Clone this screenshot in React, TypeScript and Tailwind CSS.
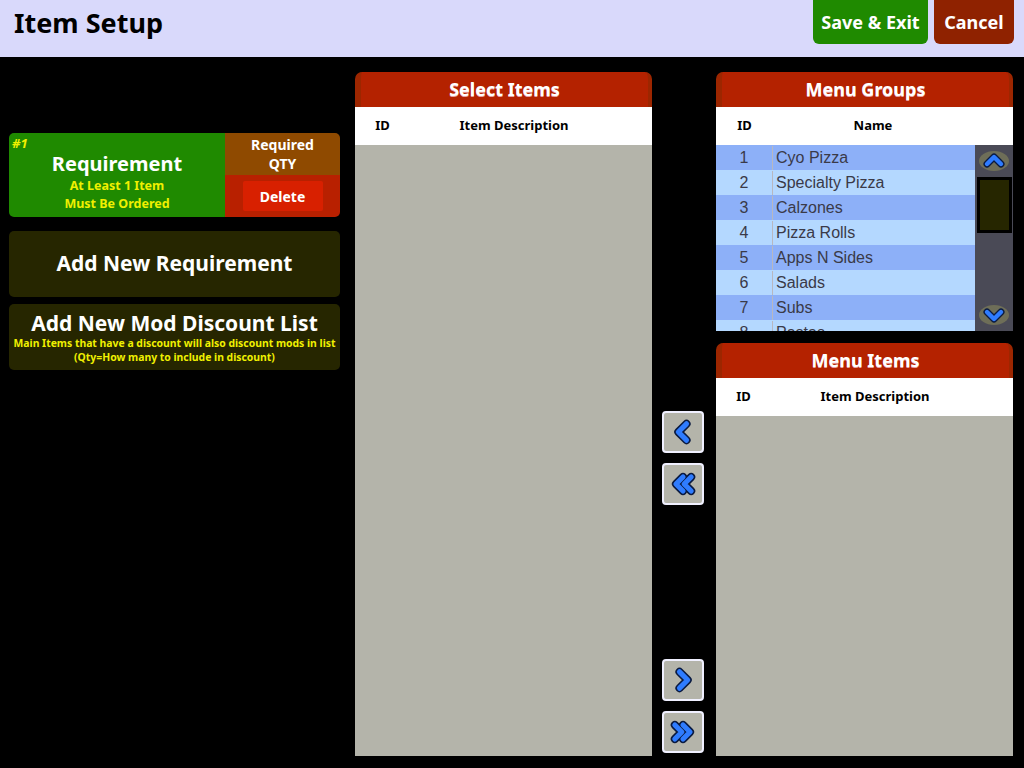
import type { ReactNode } from 'react';

const groups = [
  'Cyo Pizza',
  'Specialty Pizza',
  'Calzones',
  'Pizza Rolls',
  'Apps N Sides',
  'Salads',
  'Subs',
  'Pastas',
];

const boldFont = "font-['Noto_Sans',sans-serif] font-bold";

// Blue chevron with a dark outline, used on the move buttons and scroll arrows
function Chevron({ dir, double = false, size = 26 }: { dir: 'left' | 'right' | 'up' | 'down'; double?: boolean; size?: number }) {
  const rot = { right: 0, down: 90, left: 180, up: 270 }[dir];
  const paths = double ? ['M5 6 L11 12 L5 18', 'M12 6 L18 12 L12 18'] : ['M9 5 L16 12 L9 19'];
  return (
    <svg width={size} height={size} viewBox="0 0 24 24" style={{ transform: `rotate(${rot}deg)` }}>
      {paths.map((d) => (
        <path key={d + 'o'} d={d} fill="none" stroke="#0a1a40" strokeWidth={7} strokeLinecap="round" strokeLinejoin="round" />
      ))}
      {paths.map((d) => (
        <path key={d + 'i'} d={d} fill="none" stroke="#2f7cff" strokeWidth={4.4} strokeLinecap="round" strokeLinejoin="round" />
      ))}
    </svg>
  );
}

function PanelHeader({ title }: { title: string }) {
  return (
    <div className="relative h-[35px] rounded-t-[7px] bg-[#b42200] border-l-[6px] border-r-[4px] border-[#9c2600] flex items-center justify-center">
      <span className={`${boldFont} text-[18px] text-white [text-shadow:0_1px_0_#e8a0a0]`}>{title}</span>
    </div>
  );
}

function ColumnHead({ children }: { children: ReactNode }) {
  return <div className={`h-[38px] bg-white flex items-center ${boldFont} text-[13px] text-black`}>{children}</div>;
}

function MoveButton({ dir, double }: { dir: 'left' | 'right'; double?: boolean }) {
  return (
    <div className="w-[42px] h-[42px] rounded-[4px] border-2 border-[#f0f0ff] bg-[#b4b4aa] flex items-center justify-center">
      <Chevron dir={dir} double={double} size={28} />
    </div>
  );
}

export default function App() {
  return (
    <div className="w-[1024px] h-[768px] bg-black flex flex-col overflow-hidden">
      <div className="h-[57px] bg-[#d9d9fb] flex items-start justify-between pl-[14px] pr-[10px]">
        <h1 className={`${boldFont} text-[27px] text-black leading-none mt-[9px]`}>Item Setup</h1>
        <div className="flex gap-[6px]">
          <button className={`h-[44px] w-[115px] rounded-b-[6px] bg-[#1f8a00] text-white ${boldFont} text-[18px]`}>Save &amp; Exit</button>
          <button className={`h-[44px] w-[80px] rounded-b-[6px] bg-[#8f2200] text-white ${boldFont} text-[18px]`}>Cancel</button>
        </div>
      </div>

      <div className="flex-1 flex pt-[15px] pb-[12px]">
        {/* left column: requirement cards */}
        <div className="w-[331px] ml-[9px] pt-[61px] flex flex-col">
          <div className="h-[84px] rounded-[5px] overflow-hidden flex">
            <div className="relative w-[216px] bg-[#1f8a00] flex flex-col items-center pt-[17px]">
              <span className={`absolute left-[3px] top-[1px] ${boldFont} italic text-[13px] text-[#f0f000]`}>#1</span>
              <span className={`${boldFont} text-[20px] text-white leading-[27px]`}>Requirement</span>
              <span className={`${boldFont} text-[12.5px] text-[#f0f000] leading-[18px]`}>At Least 1 Item</span>
              <span className={`${boldFont} text-[12.5px] text-[#f0f000] leading-[17px]`}>Must Be Ordered</span>
            </div>
            <div className="flex-1 flex flex-col">
              <div className={`h-[42px] bg-[#8f4a00] flex flex-col items-center justify-center text-white ${boldFont} text-[14px] leading-[19px]`}>
                <span>Required</span>
                <span>QTY</span>
              </div>
              <div className="flex-1 bg-[#b82000] flex items-center justify-center">
                <div className={`w-[80px] h-[30px] bg-[#d82000] rounded-[2px] flex items-center justify-center text-white ${boldFont} text-[14px]`}>Delete</div>
              </div>
            </div>
          </div>

          <div className={`mt-[14px] h-[66px] rounded-[5px] bg-[#262600] flex items-center justify-center text-white ${boldFont} text-[21px]`}>
            Add New Requirement
          </div>

          <div className="mt-[7px] h-[66px] rounded-[5px] bg-[#262600] flex flex-col items-center justify-center">
            <span className={`text-white ${boldFont} text-[21px] leading-[26px]`}>Add New Mod Discount List</span>
            <span className={`text-[#f0f000] ${boldFont} text-[10.4px] leading-[14px]`}>Main Items that have a discount will also discount mods in list</span>
            <span className={`text-[#f0f000] ${boldFont} text-[10.4px] leading-[14px]`}>(Qty=How many to include in discount)</span>
          </div>
        </div>

        {/* select items */}
        <div className="w-[297px] ml-[15px] flex flex-col">
          <PanelHeader title="Select Items" />
          <ColumnHead>
            <span className="w-[55px] text-center">ID</span>
            <span className="w-[208px] text-center">Item Description</span>
          </ColumnHead>
          <div className="flex-1 bg-[#b4b4aa]" />
        </div>

        {/* move buttons */}
        <div className="w-[42px] ml-[10px] pt-[339px] pb-[3px] flex flex-col justify-between">
          <div className="flex flex-col gap-[10px]">
            <MoveButton dir="left" />
            <MoveButton dir="left" double />
          </div>
          <div className="flex flex-col gap-[10px]">
            <MoveButton dir="right" />
            <MoveButton dir="right" double />
          </div>
        </div>

        {/* right column */}
        <div className="w-[297px] ml-[12px] flex flex-col">
          <PanelHeader title="Menu Groups" />
          <ColumnHead>
            <span className="w-[57px] text-center">ID</span>
            <span className="w-[200px] text-center">Name</span>
          </ColumnHead>
          <div className="h-[186px] flex overflow-hidden">
            <div className="flex-1 flex flex-col">
              {groups.map((g, i) => (
                <div
                  key={g}
                  className={`h-[25px] shrink-0 flex items-center pt-[1px] font-['Liberation_Sans',Arial,sans-serif] text-[16px] text-[#3a3a48] ${i % 2 === 0 ? 'bg-[#8db0f8]' : 'bg-[#b4d8ff]'}`}
                >
                  <span className="w-[57px] text-center border-r border-[#b8b8c0] h-full flex items-center justify-center">{i + 1}</span>
                  <span className="pl-[3px]">{g}</span>
                </div>
              ))}
            </div>
            <div className="w-[38px] bg-[#4a4a56] flex flex-col items-center pt-[6px] pb-[6px]">
              <div className="w-[30px] h-[20px] rounded-[50%] bg-[#6e6e58] flex items-center justify-center">
                <Chevron dir="up" size={24} />
              </div>
              <div className="mt-[6px] w-[35px] h-[56px] bg-[#262600] border-[3px] border-black" />
              <div className="mt-auto w-[30px] h-[20px] rounded-[50%] bg-[#6e6e58] flex items-center justify-center">
                <Chevron dir="down" size={24} />
              </div>
            </div>
          </div>

          <div className="mt-[12px] flex-1 flex flex-col">
            <PanelHeader title="Menu Items" />
            <ColumnHead>
              <span className="w-[55px] text-center">ID</span>
              <span className="w-[208px] text-center">Item Description</span>
            </ColumnHead>
            <div className="flex-1 bg-[#b4b4aa]" />
          </div>
        </div>
      </div>
    </div>
  );
}
